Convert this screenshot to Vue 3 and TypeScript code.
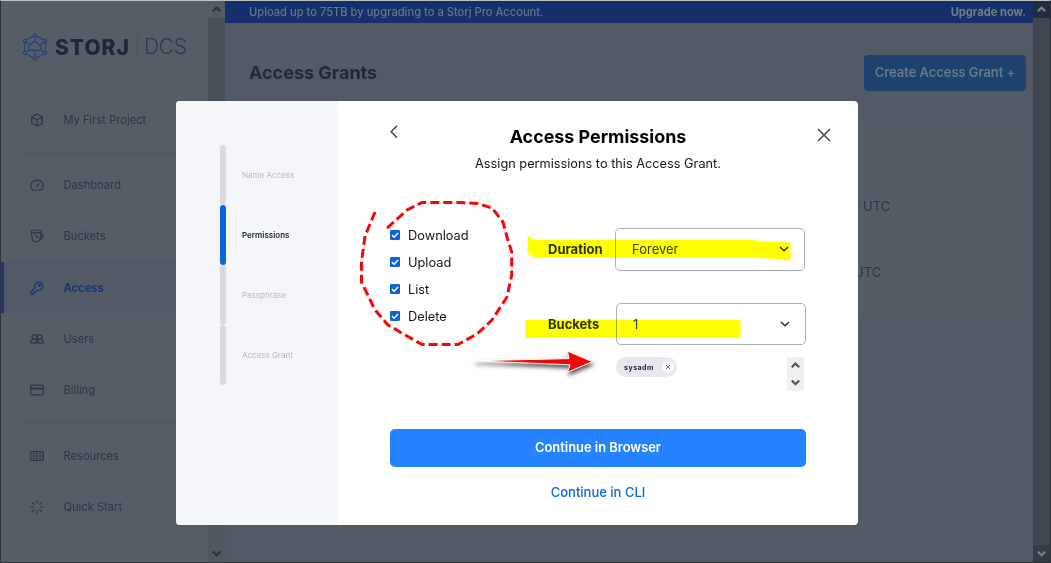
<script setup lang="ts">
interface NavItem {
  label: string
  icon: string
  active?: boolean
  group?: string
}

const navItems: NavItem[] = [
  { label: 'My First Project', icon: 'cube', group: 'first' },
  { label: 'Dashboard', icon: 'gauge' },
  { label: 'Buckets', icon: 'bucket' },
  { label: 'Access', icon: 'key', active: true },
  { label: 'Users', icon: 'users' },
  { label: 'Billing', icon: 'card', group: 'last' },
  { label: 'Resources', icon: 'book' },
  { label: 'Quick Start', icon: 'spark' },
]

const steps: string[] = ['Name Access', 'Permissions', 'Passphrase', 'Access Grant']
const currentStep = 'Permissions'
const permissions: string[] = ['Download', 'Upload', 'List', 'Delete']
</script>

<template>
  <div class="page">
    <div class="shell">
      <aside class="sidebar">
        <div class="logo">
          <svg class="logo-mark" viewBox="0 0 26 28" width="26" height="28">
            <g fill="none" stroke="#243f80" stroke-width="1.1">
              <path d="M13 2.2 23.4 8v12L13 25.8 2.6 20V8z" />
              <path d="M13 2.2v7.2M2.6 8l5.6 4M23.4 8l-5.6 4M2.6 20l5.6-3.4M23.4 20l-5.6-3.4M13 17.4v8.4" />
              <path d="M8.7 17.4a2.6 2.6 0 0 1-.3-5.1 4.4 4.4 0 0 1 8.3-.7 3 3 0 0 1 .7 5.8z" />
              <g fill="#555d66">
                <circle cx="13" cy="2.4" r="1.6" /><circle cx="23.2" cy="8" r="1.6" />
                <circle cx="23.2" cy="20" r="1.6" /><circle cx="13" cy="25.6" r="1.6" />
                <circle cx="2.8" cy="20" r="1.6" /><circle cx="2.8" cy="8" r="1.6" />
              </g>
            </g>
          </svg>
          <span class="brand">STORJ</span>
          <span class="brand-sub">DCS</span>
        </div>
        <nav>
          <div
            v-for="item in navItems"
            :key="item.label"
            class="nav-item"
            :class="[{ active: item.active }, item.group]"
          >
            <svg class="nav-icon" viewBox="0 0 14 14" width="14" height="14" fill="none" stroke="currentColor" stroke-width="1.2">
              <template v-if="item.icon === 'cube'">
                <path d="M7 .9 12.3 4v6.2L7 13.1 1.7 10.2V4zM2 4.2l5 2.7 5-2.7M7 6.9V13" />
              </template>
              <template v-else-if="item.icon === 'gauge'">
                <path d="M2.6 12C-.9 8 1.4 2.1 7 2.1S14.9 8 11.4 12zM6.4 8.7l2.8-3.2M4 8.6h.5M4.7 5.6l.3.3M7 4.2v.6M10 8.3h.5" />
              </template>
              <template v-else-if="item.icon === 'bucket'">
                <ellipse cx="6.2" cy="2.4" rx="5" ry="1.4" />
                <path d="M1.2 2.6 2.5 11c.3 2.1 7.1 2.1 7.4 0l1.3-8.4M4.7 5.7l3.8 3.1M6 6l2.2 2.8M11 4.8c2.4.2 2.2 3.2 1.2 4.4-.7.9-1.5.6-2.1.1" />
              </template>
              <template v-else-if="item.icon === 'key'">
                <path d="M5 6.9a4 4 0 1 1 2.4 2.3L6 10.4l-1.3.2-.3 1.3-1.1.2-.8 1H.7v-2z" />
                <circle cx="9.5" cy="4.4" r=".7" />
              </template>
              <template v-else-if="item.icon === 'users'">
                <circle cx="4.5" cy="5" r="2.4" /><circle cx="9.5" cy="5" r="2.4" />
                <path d="M2.8 7.2C1.2 7.8.7 9.3.7 11h7.6c0-2-.7-3.3-2.1-3.8M7.8 7.4c-1.2.6-1.8 1.8-1.8 3.6h7.3c0-2-.6-3.3-2.1-3.8" />
              </template>
              <template v-else-if="item.icon === 'card'">
                <rect x=".7" y="2.1" width="12.6" height="9.8" rx="1.3" /><path d="M.7 5.5h12.6" stroke-width="2" />
              </template>
              <template v-else-if="item.icon === 'book'">
                <rect x=".7" y="2.6" width="12.6" height="8.7" rx="1" />
                <path d="M7 2.6v8.7M2.6 5h2.6M2.6 7h2.6M2.6 9h2.6M8.8 5h2.6M8.8 7h2.6M8.8 9h2.6" />
              </template>
              <template v-else>
                <path d="M7 .6v3M7 10.4v3M.6 7h3M10.4 7h3M2.4 2.4l2.1 2.1M9.5 9.5l2.1 2.1M2.4 11.6l2.1-2.1M9.5 4.5l2.1-2.1" />
              </template>
            </svg>
            <span>{{ item.label }}</span>
          </div>
        </nav>
      </aside>

      <div class="scroll side-scroll">
        <svg class="cap" viewBox="0 0 17 17"><path d="m4.8 10.2 3.7-3.7 3.7 3.7" /></svg>
        <svg class="cap" viewBox="0 0 17 17"><path d="m4.8 6.5 3.7 3.7 3.7-3.7" /></svg>
      </div>

      <main class="main">
        <div class="banner">
          <span>Upload up to 75TB by upgrading to a Storj Pro Account.</span>
          <b>Upgrade now.</b>
        </div>
        <header class="heading">
          <h1>Access Grants</h1>
          <button class="create">Create Access Grant +</button>
        </header>
        <section class="grants">
          <p><i>1</i> UTC</p>
          <p>UTC</p>
        </section>
      </main>

      <div class="scroll main-scroll">
        <svg class="cap" viewBox="0 0 17 17"><path d="m4.8 10.2 3.7-3.7 3.7 3.7" /></svg>
        <svg class="cap" viewBox="0 0 17 17"><path d="m4.8 6.5 3.7 3.7 3.7-3.7" /></svg>
      </div>
    </div>

    <div class="modal">
      <div class="steps">
        <div v-for="step in steps" :key="step" class="step" :class="{ current: step === currentStep }">
          <span class="track"></span>
          <span>{{ step }}</span>
        </div>
      </div>
      <div class="body">
        <div class="top">
          <svg width="8" height="14" viewBox="0 0 8 14"><path d="M7 .8 1.2 6.7 7 12.7" fill="none" stroke="#384250" stroke-width="1.4" /></svg>
          <div class="titles">
            <h2>Access Permissions</h2>
            <p>Assign permissions to this Access Grant.</p>
          </div>
          <svg class="close" width="14" height="14" viewBox="0 0 14 14"><path d="m1 1 12 12M13 1 1 13" fill="none" stroke="#384b65" stroke-width="1.5" /></svg>
        </div>
        <div class="form">
          <div class="checks">
            <label v-for="p in permissions" :key="p" class="check">
              <svg width="10" height="10" viewBox="0 0 10 10">
                <rect width="10" height="10" rx="1.2" fill="#0b63d8" />
                <path d="m2 5.1 2.1 2.1L8.1 2.9" fill="none" stroke="#fff" stroke-width="1.5" />
              </svg>
              <span>{{ p }}</span>
            </label>
          </div>
          <div class="fields">
            <div class="field duration">
              <b>Duration</b>
              <div class="select">
                <span>Forever</span>
                <svg width="10" height="6" viewBox="0 0 10 6"><path d="m1 1 4 3.7L9 1" /></svg>
              </div>
            </div>
            <div class="field buckets">
              <b>Buckets</b>
              <div class="select">
                <span>1</span>
                <svg width="10" height="6" viewBox="0 0 10 6"><path d="m1 1 4 3.7L9 1" /></svg>
              </div>
            </div>
            <div class="chosen">
              <div class="chip">
                <span>sysadm</span>
                <svg width="12" height="12" viewBox="0 0 12 12"><circle cx="6" cy="6" r="5.8" fill="#fff" /><path d="m4 4 4 4M8 4 4 8" stroke="#384b65" stroke-width=".8" /></svg>
              </div>
              <div class="scroll mini">
                <svg class="cap" viewBox="0 0 17 17"><path d="m4.8 10.2 3.7-3.7 3.7 3.7" /></svg>
                <svg class="cap" viewBox="0 0 17 17"><path d="m4.8 6.5 3.7 3.7 3.7-3.7" /></svg>
              </div>
            </div>
          </div>
        </div>
        <button class="primary">Continue in Browser</button>
        <a class="link">Continue in CLI</a>
      </div>
    </div>

    <svg class="marker" viewBox="0 0 1051 563" width="1051" height="563" fill="#ff0">
      <path d="M528 235.5 532.5 239.5H750L765 241.5 790.5 242.5V260.5L781 259.5 754 257.5H533.5L527.5 252z" />
      <path d="M525.5 320H740.5V337.5H567L525.5 338z" />
    </svg>
    <svg class="ink" viewBox="0 0 1051 563" width="1051" height="563">
      <path
        d="M375 212 365 236 361.5 262V282L375 310 388 325 407 336 422 344.5H458L477 334 492 320 507 297 511.7 275V252L507 237 503 222 492 208 478 203.5 460 202.5H422L407 210 386 229"
        fill="none" stroke="#fa0505" stroke-width="3" stroke-dasharray="9 4"
      />
      <path class="arrow" d="M474 360.8 569 358.6 567.5 351.2 592.5 361.7 567.5 372.2 570 364.8z" />
    </svg>
  </div>
</template>

<style>
body { margin: 0; overflow: hidden; }
</style>

<style scoped>
* { box-sizing: border-box; }
h1, h2, p { margin: 0; }
button { border: 0; font-family: inherit; }
.page {
  position: relative;
  width: 1051px;
  height: 563px;
  overflow: hidden;
  font-family: Inter, "Liberation Sans", sans-serif;
  font-size: 13px;
}
.shell {
  display: flex;
  width: 1051px;
  height: 563px;
  border: solid #2b343b;
  border-width: 1px;
  border-top-color: #b9c0bf;
  background: #535a65;
}
.sidebar { width: 207px; background: #555d66; }
.logo { display: flex; align-items: center; height: 28px; margin: 32px 0 0 21px; }
.brand {
  margin-left: 7px;
  font-family: Inter, sans-serif;
  font-size: 21px;
  font-weight: 800;
  letter-spacing: 1px;
  color: #1a263e;
}
.brand-sub {
  margin-left: 7px;
  padding-left: 6px;
  border-left: 1px solid #49515d;
  font-size: 21px;
  line-height: 24px;
  font-weight: 300;
  letter-spacing: -.3px;
  color: #303948;
}
nav { margin-top: 33px; }
.nav-item {
  display: flex;
  align-items: center;
  height: 51.3px;
  padding-left: 29px;
  border-left: 0 solid #1b3676;
  color: #2d3543;
  font-size: 11.15px;
}
.nav-item span { margin-left: 19.5px; }
.nav-item.first, .nav-item.last {
  height: 58.5px;
  margin-bottom: 7px;
  padding-bottom: 7px;
  background: linear-gradient(#4f5761, #4f5761) 20px 100% / 187px 1px no-repeat;
}
.nav-item.active {
  padding-left: 26px;
  border-left-width: 3px;
  background: #525a66;
  color: #173472;
  font-weight: 700;
}
.scroll { display: flex; flex-direction: column; justify-content: space-between; width: 17px; }
.cap { display: block; width: 17px; height: 17px; fill: none; stroke: #2b323a; stroke-width: 2.2; }
.side-scroll { background: linear-gradient(#535b65 17px, #474f59 17px, #474f59 500px, #505761 500px); }
.main-scroll { background: linear-gradient(#1f2b43 17px, #3f4650 17px, #3f4650 544px, #363c45 544px); }
.main-scroll .cap { stroke: #7d828a; }
.main { width: 808px; }
.banner {
  display: flex;
  justify-content: space-between;
  height: 22px;
  padding: 0 7px 0 24px;
  background: #152f6c;
  color: #6b7488;
  font-size: 11.15px;
  font-weight: 500;
  line-height: 23px;
}
.banner b { font-weight: 700; color: #737b8b; }
.heading { display: flex; align-items: center; justify-content: space-between; height: 100px; padding: 0 7px 0 24px; }
.heading h1 { margin-top: -2px; font-size: 18px; font-weight: 700; color: #1d2838; }
.create {
  width: 162px;
  height: 36px;
  padding: 0 0 2px;
  border-radius: 4px;
  background: #1d426f;
  color: #69798f;
  font-size: 12.9px;
  font-weight: 600;
}
.grants {
  width: 777px;
  height: 202px;
  margin: -8px 0 0 24px;
  padding: 83px 0 0 605px;
  border-radius: 4px;
  background: #555c65;
  color: #2d3543;
}
.grants p { height: 66px; line-height: 16px; font-size: 13px; }
.grants i { font-style: normal; }
.modal {
  position: absolute;
  left: 176px;
  top: 101px;
  display: flex;
  width: 682px;
  height: 424px;
  overflow: hidden;
  border-radius: 4px;
  background: #fff;
  color: #10151c;
}
.steps { width: 162px; padding: 44px 0 0 44px; background: #f4f6fa; }
.step { display: flex; align-items: center; gap: 16px; height: 60px; font-size: 8px; color: #b5b9c1; }
.track { width: 6px; height: 60px; border-radius: 3px; background: #dadbdf; }
.current { color: #1b2533; font-weight: 600; }
.current .track { background: #0668dc; }
.body { width: 468px; margin-left: 52px; padding-right: 52px; }
.top { display: flex; justify-content: space-between; width: 441px; height: 101px; padding-top: 24px; }
.titles { width: 330px; margin: 0 19px 0 0; text-align: center; }
.titles h2 { font-size: 17.9px; line-height: 24px; font-weight: 700; color: #000; }
.titles p { margin-top: 6px; font-size: 12.75px; line-height: 17px; }
.close { margin-top: 3px; }
.form { display: flex; height: 227px; }
.checks { width: 158px; padding-top: 20px; }
.check { display: flex; align-items: center; gap: 8px; height: 27px; font-size: 12.8px; }
.check svg { margin-top: -1px; }
.fields { width: 258px; padding-top: 26px; }
.field { display: flex; align-items: center; height: 43px; font-size: 13px; }
.field b { width: 67px; font-weight: 700; color: #2b3543; }
.duration b, .duration span { margin-top: -1px; }
.select {
  display: flex;
  align-items: center;
  justify-content: space-between;
  width: 190px;
  height: 43px;
  padding: 0 15px 0 16px;
  border: 1px solid #a9b1bd;
  border-radius: 5px;
  color: #384250;
}
.duration .select svg { margin-top: -1px; }
.select svg { fill: none; stroke: #28323e; stroke-width: 1.5; }
.buckets { height: 42px; margin-top: 32px; }
.buckets b { width: 68px; }
.buckets .select { height: 42px; }
.chosen { display: flex; justify-content: space-between; margin: 12px 2px 0 68px; }
.chip {
  display: flex;
  align-items: center;
  justify-content: space-between;
  width: 61px;
  height: 20px;
  padding: 0 3px 0 8px;
  border-radius: 10px;
  background: #e7e9ee;
  color: #1b2533;
  font-size: 7px;
  font-weight: 700;
  letter-spacing: .5px;
}
.mini { height: 34px; background: #f0f0f0; }
.mini .cap { stroke: #555; }
.primary {
  display: block;
  width: 416px;
  height: 38px;
  padding: 0 0 2px;
  border-radius: 5px;
  background: #2683ff;
  color: #fff;
  font-size: 12.9px;
  font-weight: 600;
}
.link { display: block; width: 416px; margin-top: 17px; text-align: center; font-size: 13px; line-height: 17px; font-weight: 500; color: #0668dc; }
.marker, .ink { position: absolute; left: 0; top: 0; pointer-events: none; }
.marker { mix-blend-mode: multiply; }
.arrow { fill: #f40505; stroke: #fff; stroke-width: 1; filter: drop-shadow(1px 3px 2px rgba(0, 0, 0, .65)); }
</style>
